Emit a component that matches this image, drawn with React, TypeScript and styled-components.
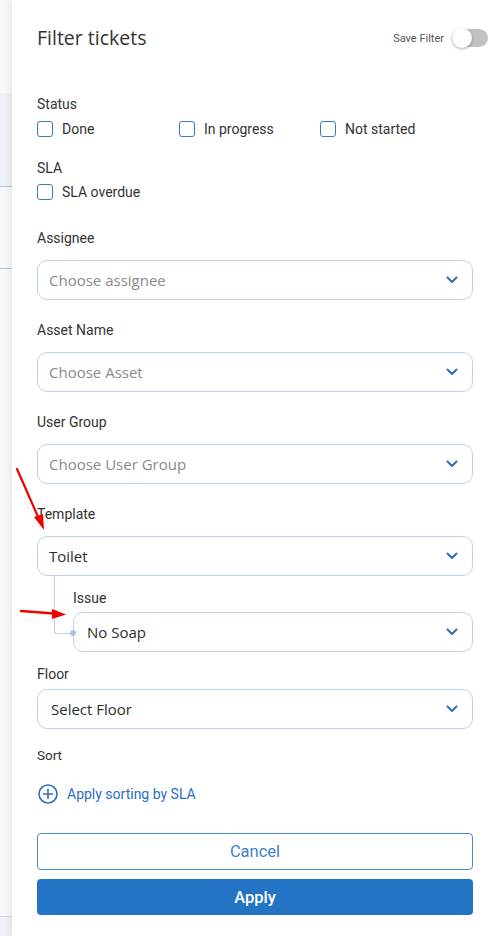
import React from "react";
import styled, { createGlobalStyle } from "styled-components";

const Global = createGlobalStyle`
  html, body { margin: 0; padding: 0; background: #ffffff; }
  body { font-family: Roboto, "Liberation Sans", sans-serif; }
  * { box-sizing: border-box; }
`;

const Page = styled.div`
  position: relative;
  display: flex;
  width: 499px;
  height: 936px;
  overflow: hidden;
  background: #ffffff;
`;

const Backdrop = styled.div`
  width: 12px;
  flex-shrink: 0;
  display: flex;
  flex-direction: column;
  background: #f8f8f9;
`;

const BackBand = styled.div<{ $h: number; $bg: string; $line?: string }>`
  height: ${(p) => p.$h}px;
  flex-shrink: 0;
  background: ${(p) => p.$bg};
  border-bottom: ${(p) => (p.$line ? `1px solid ${p.$line}` : "none")};
`;

const BackFill = styled.div`
  flex: 1;
  background: #eef2f7;
`;

const Panel = styled.div`
  flex: 1;
  display: flex;
  flex-direction: column;
  padding: 26px 26px 0 25px;
  background: #ffffff;
  box-shadow: -3px 0 6px rgba(0, 0, 0, 0.06);
  z-index: 1;
`;

const Header = styled.div`
  display: flex;
  align-items: center;
  justify-content: space-between;
  height: 24px;
  margin-right: -15px;
`;

const Title = styled.h1`
  margin: 0;
  font-family: "Open Sans", sans-serif;
  font-size: 19.5px;
  font-weight: 500;
  color: #333333;
  line-height: 24px;
`;

const SaveWrap = styled.div`
  display: flex;
  align-items: center;
  gap: 8px;
`;

const SaveLabel = styled.span`
  font-size: 11px;
  color: #555555;
`;

const Track = styled.div`
  position: relative;
  width: 36px;
  height: 18px;
  border-radius: 9px;
  background: #c2c2c2;
`;

const Knob = styled.div`
  position: absolute;
  left: 0;
  top: -1px;
  width: 20px;
  height: 20px;
  border-radius: 50%;
  background: #ffffff;
  box-shadow: 0 1px 3px rgba(0, 0, 0, 0.35);
`;

const Label = styled.div<{ $mt: number; $mb: number; $size?: number }>`
  margin-top: ${(p) => p.$mt}px;
  margin-bottom: ${(p) => p.$mb}px;
  font-size: ${(p) => p.$size ?? 14}px;
  line-height: 20px;
  color: #333333;
`;

const CheckRow = styled.div`
  display: grid;
  grid-template-columns: 142px 141px 1fr;
  height: 20px;
  align-items: center;
`;

const CheckItem = styled.label`
  display: flex;
  align-items: center;
  gap: 9px;
  font-size: 14px;
  color: #333333;
`;

const Box = styled.span`
  width: 16px;
  height: 16px;
  border: 1.5px solid #3b7bc6;
  border-radius: 3px;
  background: #ffffff;
`;

const Select = styled.div<{ $filled?: boolean; $pad?: number }>`
  display: flex;
  align-items: center;
  justify-content: space-between;
  height: 40px;
  padding: 0 14px 0 ${(p) => p.$pad ?? 11}px;
  border: 1px solid #bcd2ec;
  border-radius: 10px;
  background: #ffffff;
  font-family: "Open Sans", sans-serif;
  font-size: 15px;
  color: ${(p) => (p.$filled ? "#2d2d2d" : "#8a8a8a")};
`;

const SubGroup = styled.div`
  position: relative;
  padding-left: 36px;
  &::before {
    content: "";
    position: absolute;
    left: 17px;
    top: 0;
    width: 17px;
    height: 57px;
    border-left: 1px solid #bcd2ec;
    border-bottom: 1px solid #bcd2ec;
    border-bottom-left-radius: 3px;
  }
  &::after {
    content: "";
    position: absolute;
    left: 33px;
    top: 54px;
    width: 6px;
    height: 6px;
    border-radius: 50%;
    background: #a9c4e6;
  }
`;

const SortLink = styled.div`
  display: flex;
  align-items: center;
  gap: 9px;
  margin-top: 17px;
  height: 24px;
  font-size: 14px;
  color: #2a6fc0;
  svg { margin-left: 1px; }
`;

const CancelButton = styled.button`
  margin-top: 27px;
  height: 37px;
  border: 1px solid #4a88d2;
  border-radius: 4px;
  background: #ffffff;
  font-family: Roboto, sans-serif;
  font-size: 16.5px;
  color: #3d80cc;
`;

const ApplyButton = styled.button`
  margin-top: 9px;
  height: 36px;
  border: none;
  border-radius: 4px;
  background: #2374c4;
  font-family: Roboto, sans-serif;
  font-size: 16.5px;
  font-weight: 500;
  color: #ffffff;
`;

const Annotation = styled.svg`
  position: absolute;
  left: 0;
  top: 0;
  z-index: 5;
  pointer-events: none;
`;

const Chevron = () => (
  <svg width="12" height="8" viewBox="0 0 12 8">
    <polyline points="1.5,1.5 6,6 10.5,1.5" fill="none" stroke="#2f6fb8" strokeWidth="2" strokeLinecap="round" strokeLinejoin="round" />
  </svg>
);

const PlusCircle = () => (
  <svg width="20" height="20" viewBox="0 0 20 20">
    <circle cx="10" cy="10" r="9" fill="none" stroke="#2a6fc0" strokeWidth="1.6" />
    <line x1="10" y1="5.5" x2="10" y2="14.5" stroke="#2a6fc0" strokeWidth="1.6" strokeLinecap="round" />
    <line x1="5.5" y1="10" x2="14.5" y2="10" stroke="#2a6fc0" strokeWidth="1.6" strokeLinecap="round" />
  </svg>
);

const SelectField = ({ text, filled, pad }: { text: string; filled?: boolean; pad?: number }) => (
  <Select $filled={filled} $pad={pad}>
    <span>{text}</span>
    <Chevron />
  </Select>
);

export default function App() {
  return (
    <>
      <Global />
      <Page>
        <Backdrop>
          <BackBand $h={93} $bg="#f8f8f9" />
          <BackBand $h={94} $bg="#eef1f5" $line="#a9c3e3" />
          <BackBand $h={82} $bg="#f8f8f9" $line="#a9c3e3" />
          <BackBand $h={648} $bg="#f8f8f9" $line="#c9d6e6" />
          <BackFill />
        </Backdrop>
        <Panel>
          <Header>
            <Title>Filter tickets</Title>
            <SaveWrap>
              <SaveLabel>Save Filter</SaveLabel>
              <Track>
                <Knob />
              </Track>
            </SaveWrap>
          </Header>

          <Label $mt={44} $mb={5}>Status</Label>
          <CheckRow>
            <CheckItem><Box />Done</CheckItem>
            <CheckItem><Box />In progress</CheckItem>
            <CheckItem><Box />Not started</CheckItem>
          </CheckRow>

          <Label $mt={19} $mb={4}>SLA</Label>
          <CheckRow>
            <CheckItem><Box />SLA overdue</CheckItem>
          </CheckRow>

          <Label $mt={26} $mb={12}>Assignee</Label>
          <SelectField text="Choose assignee" />

          <Label $mt={20} $mb={12}>Asset Name</Label>
          <SelectField text="Choose Asset" />

          <Label $mt={20} $mb={12}>User Group</Label>
          <SelectField text="Choose User Group" />

          <Label $mt={20} $mb={12}>Template</Label>
          <SelectField text="Toilet" filled pad={11} />

          <SubGroup>
            <Label $mt={12} $mb={4}>Issue</Label>
            <SelectField text="No Soap" filled pad={13} />
          </SubGroup>

          <Label $mt={12} $mb={5}>Floor</Label>
          <SelectField text="Select Floor" filled pad={13} />

          <Label $mt={16} $mb={0} $size={13.5}>Sort</Label>
          <SortLink>
            <PlusCircle />
            Apply sorting by SLA
          </SortLink>

          <CancelButton>Cancel</CancelButton>
          <ApplyButton>Apply</ApplyButton>
        </Panel>

        <Annotation width="499" height="936" viewBox="0 0 499 936">
          <line x1="17" y1="469" x2="39" y2="519" stroke="#f00000" strokeWidth="2.2" strokeLinecap="round" />
          <polygon points="44,530 34,517 43,514" fill="#f00000" />
          <line x1="21" y1="611" x2="54" y2="613.5" stroke="#f00000" strokeWidth="2.6" strokeLinecap="round" />
          <polygon points="66,614.5 52,609 52,619" fill="#f00000" />
        </Annotation>
      </Page>
    </>
  );
}
